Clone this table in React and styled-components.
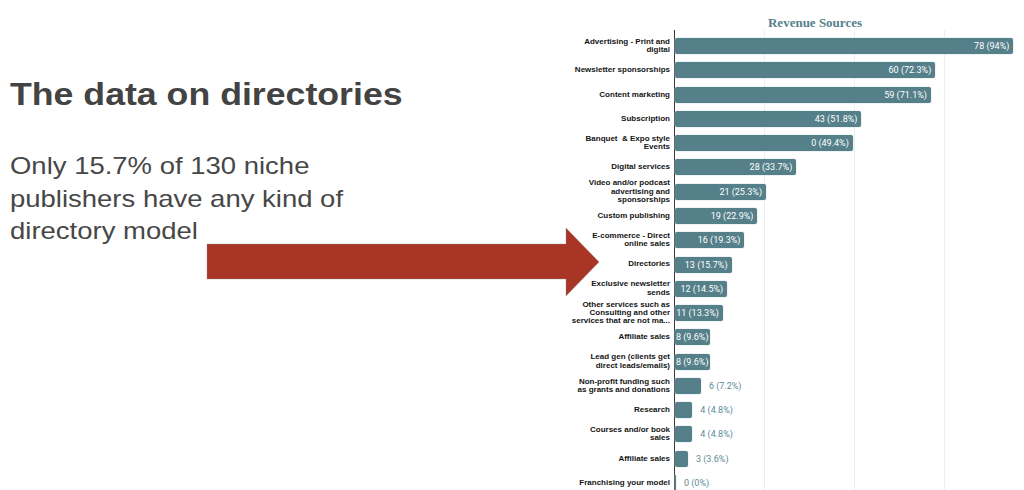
import React from 'react';
import styled, {createGlobalStyle} from 'styled-components';

const GlobalStyle = createGlobalStyle`
    html, body {
        margin: 0;
        padding: 0;
        background: #ffffff;
    }
    body {
        font-family: "Liberation Sans", Arial, sans-serif;
        overflow: hidden;
    }
`;

// px per percent point of the x axis
const SCALE = 3.6;
const ROW_HEIGHT = 24.28;

const revenueSources = [
    {label: ['Advertising - Print and', 'digital'], count: 78, pct: 94},
    {label: ['Newsletter sponsorships'], count: 60, pct: 72.3},
    {label: ['Content marketing'], count: 59, pct: 71.1},
    {label: ['Subscription'], count: 43, pct: 51.8},
    {label: ['Banquet  & Expo style', 'Events'], count: 0, pct: 49.4},
    {label: ['Digital services'], count: 28, pct: 33.7},
    {label: ['Video and/or podcast', 'advertising and', 'sponsorships'], count: 21, pct: 25.3},
    {label: ['Custom publishing'], count: 19, pct: 22.9},
    {label: ['E-commerce - Direct', 'online sales'], count: 16, pct: 19.3},
    {label: ['Directories'], count: 13, pct: 15.7},
    {label: ['Exclusive newsletter', 'sends'], count: 12, pct: 14.5},
    {label: ['Other services such as', 'Consulting and other', 'services that are not ma...'], count: 11, pct: 13.3},
    {label: ['Affiliate sales'], count: 8, pct: 9.6},
    {label: ['Lead gen (clients get', 'direct leads/emails)'], count: 8, pct: 9.6},
    {label: ['Non-profit funding such', 'as grants and donations'], count: 6, pct: 7.2},
    {label: ['Research'], count: 4, pct: 4.8},
    {label: ['Courses and/or book', 'sales'], count: 4, pct: 4.8},
    {label: ['Affiliate sales'], count: 3, pct: 3.6},
    {label: ['Franchising your model'], count: 0, pct: 0},
];

function Arrow() {
    return (
        <ArrowWrap>
            <svg width="394" height="70" viewBox="0 0 394 70">
                <polygon
                    points="1,17 360,17 360,1 393,35 360,69 360,52 1,52"
                    fill="#a93527"
                    stroke="rgba(140,140,140,0.45)"
                    strokeWidth="0.8"
                />
            </svg>
        </ArrowWrap>
    );
}

function RevenueChart() {
    return (
        <Chart>
            <ChartTitle>Revenue Sources</ChartTitle>
            <ChartBody>
                <LabelColumn>
                    {revenueSources.map((row, i) => (
                        <LabelCell key={i}>
                            <Label>
                                {row.label.map((line, j) => (
                                    <span key={j}>{line}</span>
                                ))}
                            </Label>
                        </LabelCell>
                    ))}
                </LabelColumn>
                <PlotColumn>
                    {revenueSources.map((row, i) => {
                        const inside = row.pct >= 9;
                        const text = `${row.count} (${row.pct}%)`;
                        return (
                            <BarRow key={i}>
                                <Bar $tight={row.pct < 12} style={{width: row.pct * SCALE}}>
                                    {inside && <InnerValue>{text}</InnerValue>}
                                </Bar>
                                {!inside && <OuterValue>{text}</OuterValue>}
                            </BarRow>
                        );
                    })}
                </PlotColumn>
            </ChartBody>
        </Chart>
    );
}

export default function App() {
    return (
        <Page>
            <GlobalStyle/>
            <IntroColumn>
                <Heading>The data on directories</Heading>
                <Lead>
                    Only 15.7% of 130 niche publishers have any kind of directory model
                </Lead>
            </IntroColumn>
            <RevenueChart/>
            <Arrow/>
        </Page>
    );
}

const Page = styled.div`
    position: relative;
    width: 1024px;
    height: 490px;
    display: flex;
    overflow: hidden;
    background: #fff;
`;

const IntroColumn = styled.div`
    width: 560px;
    padding: 76px 0 0 10px;
    color: #454545;
`;

const Heading = styled.h1`
    margin: 0;
    font-size: 32px;
    line-height: 36px;
    font-weight: 700;
    color: #434343;
    white-space: nowrap;
    transform: scaleX(1.115);
    transform-origin: left center;
`;

const Lead = styled.p`
    margin: 38px 0 0;
    width: 318px;
    font-size: 24px;
    line-height: 32.5px;
    color: #474747;
    transform: scaleX(1.145);
    transform-origin: left top;
`;

const ArrowWrap = styled.div`
    position: absolute;
    left: 206px;
    top: 227px;
    line-height: 0;
`;

const Chart = styled.div`
    width: 454px;
    display: flex;
    flex-direction: column;
`;

const ChartTitle = styled.div`
    height: 30px;
    box-sizing: border-box;
    padding: 15px 0 0 36px;
    text-align: center;
    font-family: "Liberation Serif", "DejaVu Serif", serif;
    font-size: 13px;
    line-height: 16px;
    font-weight: 700;
    color: #55808b;
`;

const ChartBody = styled.div`
    display: flex;
    flex: 1;
`;

const LabelColumn = styled.div`
    width: 104px;
    padding-top: 4px;
    display: flex;
    flex-direction: column;
`;

const LabelCell = styled.div`
    height: ${ROW_HEIGHT}px;
    flex-shrink: 0;
    display: flex;
    align-items: center;
    justify-content: flex-end;
    padding-right: 4px;
`;

const Label = styled.div`
    display: flex;
    flex-direction: column;
    align-items: flex-end;
    font-size: 8px;
    line-height: 8.3px;
    font-weight: 700;
    color: #141414;
    white-space: pre;
    text-align: right;
`;

const PlotColumn = styled.div`
    flex: 1;
    padding-top: 4px;
    border-left: 1px solid #3a3a3a;
    display: flex;
    flex-direction: column;
    background-image: repeating-linear-gradient(
        to right,
        transparent 0,
        transparent 89px,
        #eeeeee 89px,
        #eeeeee 90px
    );
`;

const BarRow = styled.div`
    height: ${ROW_HEIGHT}px;
    flex-shrink: 0;
    display: flex;
    align-items: center;
`;

const Bar = styled.div`
    height: 16px;
    box-sizing: border-box;
    background: #55808a;
    border-radius: 2px;
    display: flex;
    align-items: center;
    justify-content: flex-end;
    padding-right: ${p => (p.$tight ? '1px' : '4px')};
    box-shadow: 0 0 0 0.5px rgba(200, 215, 220, 0.6);
`;

const InnerValue = styled.span`
    font-family: Roboto, "Liberation Sans", sans-serif;
    font-size: 9px;
    color: #ffffff;
    white-space: nowrap;
`;

const OuterValue = styled.span`
    margin-left: 8px;
    font-family: Roboto, "Liberation Sans", sans-serif;
    font-size: 9px;
    color: #5b8a95;
    white-space: nowrap;
`;
